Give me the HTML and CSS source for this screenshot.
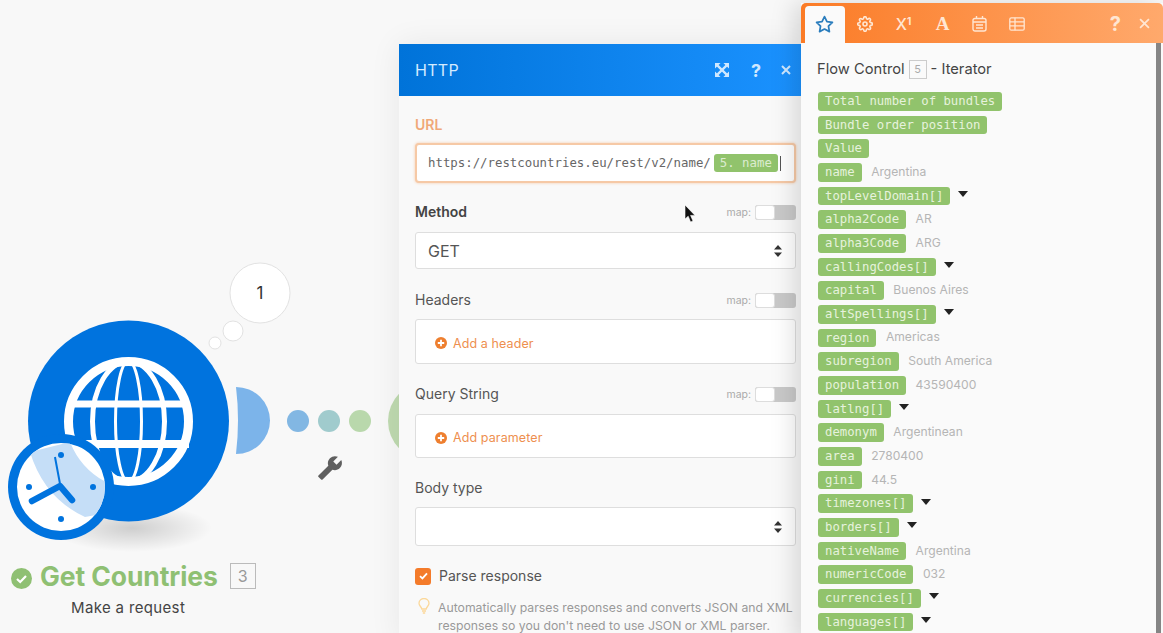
FILE: index.html
```html
<!DOCTYPE html>
<html lang="en">
<head>
    <meta charset="UTF-8">
    <meta name="viewport" content="width=device-width, initial-scale=1.0">
    <title>HTTP module mapping</title>
    <link rel="stylesheet" href="styles.css">
</head>
<body>
<div class="canvas">

    <!-- scenario nodes -->
    <svg class="scenario" width="399" height="633" viewBox="0 0 399 633">
        <defs>
            <radialGradient id="floor">
                <stop offset="0" stop-color="#000" stop-opacity=".17"/>
                <stop offset="1" stop-color="#000" stop-opacity="0"/>
            </radialGradient>
            <clipPath id="face"><circle cx="61" cy="487" r="44"/></clipPath>
        </defs>

        <circle cx="427" cy="421" r="39" fill="#bfdab0"/>
        <ellipse cx="132" cy="528" rx="80" ry="24" fill="url(#floor)"/>

        <circle cx="260" cy="293" r="30" fill="#fff" stroke="#e2e2e2"/>
        <text x="260" y="299" class="bubble-num" text-anchor="middle">1</text>
        <circle cx="233" cy="331" r="10" fill="#fff" stroke="#e2e2e2"/>
        <circle cx="215" cy="343" r="6" fill="#fff" stroke="#e2e2e2"/>

        <circle cx="128.500" cy="421" r="100.500" fill="#0073de"/>
        <g fill="none" stroke="#fff">
            <circle cx="128.500" cy="421.500" r="60" stroke-width="9"/>
            <ellipse cx="128.500" cy="421.500" rx="36" ry="60" stroke-width="5"/>
            <ellipse cx="128.500" cy="421.500" rx="13" ry="60" stroke-width="3"/>
            <path d="M68 404H189" stroke-width="7"/>
            <path d="M68 444H189" stroke-width="8"/>
        </g>

        <circle cx="61" cy="487" r="53" fill="#0073de"/>
        <circle cx="61" cy="487" r="44" fill="#fff"/>
        <path d="M30 452Q44 498 85 517L112 512V485Q82 472 70 442Z" fill="#c5def7" clip-path="url(#face)"/>
        <g fill="#0073de">
            <circle cx="29" cy="487" r="3"/>
            <circle cx="93" cy="487" r="3"/>
            <circle cx="61" cy="455" r="3"/>
            <circle cx="61" cy="519" r="3"/>
        </g>
        <path d="M55 457L60 484" stroke="#0073de" stroke-width="2" fill="none"/>
        <path d="M32 501L60 486L72 500" stroke="#0073de" stroke-width="6.500" stroke-linecap="round" stroke-linejoin="round" fill="none"/>

        <path d="M236 387A34 33.500 0 0 1 236 454Q240 420 236 387Z" fill="#7cb4ea"/>
        <circle cx="298" cy="421" r="11" fill="#82b7e3"/>
        <circle cx="329" cy="421" r="11" fill="#a0cbcd"/>
        <circle cx="360" cy="421" r="11" fill="#b9d8ac"/>

        <g transform="translate(343 455) scale(-1.080 1.080)">
            <path d="M22.700 19l-9.100-9.100c.9-2.300.4-5-1.500-6.900-2-2-5-2.400-7.400-1.300L9 6 6 9 1.600 4.700C.4 7.100.9 10.100 2.900 12.100c1.900 1.900 4.600 2.400 6.900 1.500l9.100 9.100c.4.400 1 .4 1.400 0l2.300-2.300c.5-.4.5-1.100.1-1.400z" fill="#5f5f5f"/>
        </g>
    </svg>

    <div class="node-label">
        <div class="node-title">
            <svg class="node-check" width="21" height="21" viewBox="0 0 21 21">
                <circle cx="10.500" cy="10.500" r="10.500" fill="#8fc073"/>
                <path d="M6 11l3.200 3L15 8" fill="none" stroke="#fff" stroke-width="2.200"/>
            </svg>
            <span class="node-name">Get Countries</span>
            <span class="node-id">3</span>
        </div>
        <div class="node-sub">Make a request</div>
    </div>

    <!-- http module settings -->
    <div class="panel">
        <div class="panel-head">
            <span class="panel-title">HTTP</span>
            <svg class="head-icon" width="14" height="14" viewBox="0 0 15 15">
                <path d="M2.500 2.500L12.500 12.500M12.500 2.500L2.500 12.500" stroke="#cfe8ff" stroke-width="2.400"/>
                <path d="M0 0H6L0 6ZM15 0V6L9 0ZM0 15V9L6 15ZM15 15H9L15 9Z" fill="#cfe8ff"/>
            </svg>
            <span class="head-help">?</span>
            <svg class="head-close" width="10" height="10" viewBox="0 0 10 10">
                <path d="M1 1L9 9M9 1L1 9" stroke="#cfe8ff" stroke-width="2"/>
            </svg>
        </div>

        <div class="panel-body">
            <div class="field field-url">
                <div class="label-row"><label class="label label-active">URL</label></div>
                <div class="url-input">
                    <span class="url-text">https://restcountries.eu/rest/v2/name/</span>
                    <span class="url-pill">5. name</span>
                    <span class="url-caret"></span>
                </div>
            </div>

            <div class="field field-method">
                <div class="label-row">
                    <label class="label label-bold">Method</label>
                    <span class="map">map:</span><span class="toggle"><span class="knob"></span></span>
                </div>
                <div class="select select-get">
                    <span>GET</span>
                    <svg width="8" height="12" viewBox="0 0 8 12"><path d="M4 0L8 4.500H0ZM4 12L0 7.500H8Z" fill="#333"/></svg>
                </div>
            </div>

            <div class="field field-headers">
                <div class="label-row">
                    <label class="label">Headers</label>
                    <span class="map">map:</span><span class="toggle"><span class="knob"></span></span>
                </div>
                <div class="add-box add-box-tall">
                    <svg width="12" height="12" viewBox="0 0 12 12"><circle cx="6" cy="6" r="6" fill="#ee7f2f"/><path d="M6 2.800V9.200M2.800 6H9.200" stroke="#fff" stroke-width="1.800"/></svg>
                    <span>Add a header</span>
                </div>
            </div>

            <div class="field field-query">
                <div class="label-row">
                    <label class="label">Query String</label>
                    <span class="map">map:</span><span class="toggle"><span class="knob"></span></span>
                </div>
                <div class="add-box">
                    <svg width="12" height="12" viewBox="0 0 12 12"><circle cx="6" cy="6" r="6" fill="#ee7f2f"/><path d="M6 2.800V9.200M2.800 6H9.200" stroke="#fff" stroke-width="1.800"/></svg>
                    <span>Add parameter</span>
                </div>
            </div>

            <div class="field field-body">
                <div class="label-row"><label class="label">Body type</label></div>
                <div class="select select-body">
                    <span></span>
                    <svg width="8" height="12" viewBox="0 0 8 12"><path d="M4 0L8 4.500H0ZM4 12L0 7.500H8Z" fill="#333"/></svg>
                </div>
            </div>

            <div class="check-row">
                <span class="checkbox">
                    <svg width="9" height="8" viewBox="0 0 9 8"><path d="M1 4.200L3.400 6.400L8 1.400" fill="none" stroke="#fff" stroke-width="1.800"/></svg>
                </span>
                <span class="label">Parse response</span>
            </div>

            <div class="note">
                <svg class="bulb" width="12" height="16" viewBox="0 0 12 16">
                    <path d="M3.800 11C3.500 8.800 1 7.800 1 5.200A5 4.700 0 0 1 11 5.200C11 7.800 8.500 8.800 8.200 11ZM4 13H8M4.800 15H7.200" fill="none" stroke="#fbd89a" stroke-width="1.300"/>
                </svg>
                <p>Automatically parses responses and converts JSON and XML responses so you don't need to use JSON or XML parser.</p>
            </div>
        </div>

        <svg class="cursor" width="12" height="18" viewBox="0 0 12 18">
            <path d="M1 0V14L4.200 11.200L6.600 17L9 16L6.600 10.400H11Z" fill="#111" stroke="#fff" stroke-width=".6"/>
        </svg>
    </div>

    <!-- mapping picker -->
    <div class="picker">
        <div class="picker-tabs">
            <span class="tab tab-active">
                <svg width="19" height="19" viewBox="0 0 24 24"><polygon points="12 2 15.090 8.260 22 9.270 17 14.140 18.180 21.020 12 17.770 5.820 21.020 7 14.140 2 9.270 8.910 8.260 12 2" fill="none" stroke="#2b7dbd" stroke-width="2.200" stroke-linejoin="round"/></svg>
            </span>
            <span class="tab">
                <svg width="16" height="16" viewBox="0 0 24 24" fill="none" stroke="#ffe6d2" stroke-width="2.400"><circle cx="12" cy="12" r="3"/><path d="M19.400 15a1.650 1.650 0 0 0 .33 1.820l.06.06a2 2 0 0 1 0 2.830 2 2 0 0 1-2.830 0l-.06-.06a1.650 1.650 0 0 0-1.820-.33 1.650 1.650 0 0 0-1 1.510V21a2 2 0 0 1-2 2 2 2 0 0 1-2-2v-.09A1.650 1.650 0 0 0 9 19.400a1.650 1.650 0 0 0-1.820.33l-.06.06a2 2 0 0 1-2.830 0 2 2 0 0 1 0-2.830l.06-.06a1.650 1.650 0 0 0 .33-1.820 1.650 1.650 0 0 0-1.510-1H3a2 2 0 0 1-2-2 2 2 0 0 1 2-2h.09A1.650 1.650 0 0 0 4.600 9a1.650 1.650 0 0 0-.33-1.820l-.06-.06a2 2 0 0 1 0-2.830 2 2 0 0 1 2.830 0l.06.06a1.650 1.650 0 0 0 1.820.33H9a1.650 1.650 0 0 0 1-1.510V3a2 2 0 0 1 2-2 2 2 0 0 1 2 2v.09a1.650 1.650 0 0 0 1 1.510 1.650 1.650 0 0 0 1.820-.33l.06-.06a2 2 0 0 1 2.830 0 2 2 0 0 1 0 2.830l-.06.06a1.650 1.650 0 0 0-.33 1.820V9a1.650 1.650 0 0 0 1.510 1H21a2 2 0 0 1 2 2 2 2 0 0 1-2 2h-.09a1.650 1.650 0 0 0-1.510 1z"/></svg>
            </span>
            <span class="tab tab-math">X<sup>1</sup></span>
            <span class="tab tab-font">A</span>
            <span class="tab tab-cal">
                <svg width="15" height="16" viewBox="0 0 15 16" fill="none" stroke="#ffe6d2" stroke-width="1.400"><rect x="1" y="2.500" width="13" height="12.500" rx="2"/><path d="M1 6H14M4.500 0V3M10.500 0V3M4 9H11M4 12H11"/></svg>
            </span>
            <span class="tab tab-table">
                <svg width="16" height="14" viewBox="0 0 16 14" fill="none" stroke="#ffe6d2" stroke-width="1.300"><rect x=".8" y=".8" width="14.400" height="12.400" rx="1.500"/><path d="M.8 4.800H15.200M.8 8.800H15.200M6 .8V13.200"/></svg>
            </span>
            <span class="picker-help">?</span>
            <svg class="picker-close" width="11" height="11" viewBox="0 0 10 10"><path d="M1 1L9 9M9 1L1 9" stroke="#ffe6d2" stroke-width="1.600"/></svg>
        </div>

        <div class="picker-body">
            <div class="picker-title">Flow Control <span class="picker-id">5</span> - Iterator</div>
            <ul class="items">
                <li><span class="pill">Total number of bundles</span></li>
                <li><span class="pill">Bundle order position</span></li>
                <li><span class="pill">Value</span></li>
                <li><span class="pill">name</span><span class="val">Argentina</span></li>
                <li><span class="pill">topLevelDomain[]</span><span class="arrow"></span></li>
                <li><span class="pill">alpha2Code</span><span class="val">AR</span></li>
                <li><span class="pill">alpha3Code</span><span class="val">ARG</span></li>
                <li><span class="pill">callingCodes[]</span><span class="arrow"></span></li>
                <li><span class="pill">capital</span><span class="val">Buenos Aires</span></li>
                <li><span class="pill">altSpellings[]</span><span class="arrow"></span></li>
                <li><span class="pill">region</span><span class="val">Americas</span></li>
                <li><span class="pill">subregion</span><span class="val">South America</span></li>
                <li><span class="pill">population</span><span class="val">43590400</span></li>
                <li><span class="pill">latlng[]</span><span class="arrow"></span></li>
                <li><span class="pill">demonym</span><span class="val">Argentinean</span></li>
                <li><span class="pill">area</span><span class="val">2780400</span></li>
                <li><span class="pill">gini</span><span class="val">44.5</span></li>
                <li><span class="pill">timezones[]</span><span class="arrow"></span></li>
                <li><span class="pill">borders[]</span><span class="arrow"></span></li>
                <li><span class="pill">nativeName</span><span class="val">Argentina</span></li>
                <li><span class="pill">numericCode</span><span class="val">032</span></li>
                <li><span class="pill">currencies[]</span><span class="arrow"></span></li>
                <li><span class="pill">languages[]</span><span class="arrow"></span></li>
            </ul>
        </div>
        <div class="scrollbar"></div>
    </div>
</div>
</body>
</html>
```

FILE: styles.css
```css
*{
    box-sizing:border-box;
}
html, body{
    margin:0;
    height:100%;
    overflow:hidden;
}
body{
    background:#f8f8f8;
    font-family:"Inter","Noto Sans",sans-serif;
    color:#555;
}
.canvas{
    position:relative;
    width:1163px;
    height:633px;
    overflow:hidden;
}

/* scenario */
.scenario{
    position:absolute;
    left:0;
    top:0;
}
.bubble-num{
    font-family:"Inter",sans-serif;
    font-size:17px;
    fill:#333;
}
.node-label{
    position:absolute;
    left:11px;
    top:561px;
}
.node-title{
    display:flex;
    align-items:center;
    height:30px;
}
.node-check{
    margin-top:5px;
    margin-right:8px;
}
.node-name{
    font-size:26.500px;
    font-weight:700;
    color:#8fc073;
    margin-right:12px;
    letter-spacing:-.1px;
}
.node-id{
    width:26px;
    height:26px;
    border:1px solid #bbb;
    color:#999;
    font-size:16px;
    display:flex;
    align-items:center;
    justify-content:center;
}
.node-sub{
    font-size:15px;
    letter-spacing:.35px;
    color:#444;
    margin-top:7px;
    margin-left:60px;
}

/* http panel */
.panel{
    position:absolute;
    left:399px;
    top:44px;
    width:403px;
    height:600px;
    background:#f9f9f9;
    box-shadow:0 0 30px rgba(0,0,0,.07);
}
.panel-head{
    height:52px;
    display:flex;
    align-items:center;
    padding-left:16px;
    background:linear-gradient(90deg,#0073d9,#1b92ff);
}
.panel-title{
    font-size:16px;
    color:#d4ebff;
    flex:1;
    letter-spacing:.3px;
}
.head-icon{
    margin-right:22px;
}
.head-help{
    font-size:18px;
    font-weight:700;
    color:#cfe8ff;
    margin-right:20px;
}
.head-close{
    margin-right:11px;
}
.panel-body{
    padding:0 6px 0 16px;
}
.field-url{ margin-top:20px; }
.field-url .label-row{ margin-bottom:9px; }
.field-method{ margin-top:20px; }
.field-method .label-row{ margin-bottom:11px; }
.field-headers{ margin-top:22px; }
.field-headers .label-row{ margin-bottom:10px; }
.field-query{ margin-top:21px; }
.field-query .label-row{ margin-bottom:11px; }
.field-body{ margin-top:21px; }
.field-body .label-row{ margin-bottom:10px; }

.label-row{
    display:flex;
    align-items:center;
    height:18px;
}
.label{
    font-size:14px;
    color:#555;
    flex:1;
    margin-top:-2px;
}
.label-bold{
    font-weight:600;
    color:#444;
}
.label-active{
    font-weight:600;
    color:#f0a878;
}
.map{
    font-size:10.500px;
    color:#aaa;
    margin-right:4px;
}
.toggle{
    width:41px;
    height:15px;
    border-radius:3px;
    background:#c9c9c9;
    display:block;
}
.knob{
    display:block;
    width:20px;
    height:15px;
    border-radius:3px;
    background:#fff;
    border:1px solid #ddd;
}
.url-input{
    height:40px;
    background:#fff;
    border:2px solid #f6c9a6;
    border-radius:4px;
    box-shadow:0 0 3px #f6c9a6;
    display:flex;
    align-items:center;
    padding-left:11px;
    font-family:"DejaVu Sans Mono",monospace;
    font-size:12.370px;
    color:#666;
}
.url-text{
    margin-right:3px;
}
.url-pill{
    background:#91c36c;
    color:#dcecd0;
    height:18px;
    line-height:18px;
    padding:0 6px;
    border-radius:3px;
}
.url-caret{
    width:1px;
    height:15px;
    background:#555;
    margin-left:2px;
}
.select{
    background:#fff;
    border:1px solid #dedede;
    border-radius:3px;
    display:flex;
    align-items:center;
    justify-content:space-between;
    padding:0 13px 0 12px;
    font-size:16px;
    color:#555;
}
.select-get{ height:37px; }
.select-body{ height:39px; }
.add-box{
    height:44px;
    background:#fff;
    border:1px solid #dedede;
    border-radius:3px;
    display:flex;
    align-items:center;
    gap:6px;
    padding-left:19px;
    padding-top:3px;
    font-size:12.500px;
    color:#ee8f4f;
    letter-spacing:.1px;
}
.add-box-tall{ height:45px; }
.check-row{
    display:flex;
    align-items:center;
    gap:8px;
    margin-top:21px;
    height:18px;
}
.checkbox{
    width:16px;
    height:17px;
    border-radius:3px;
    background:#f47b2a;
    display:flex;
    align-items:center;
    justify-content:center;
}
.note{
    display:flex;
    margin-top:14px;
    padding-left:3px;
}
.bulb{
    flex:none;
    margin-right:8px;
    margin-top:-1px;
}
.note p{
    margin:0;
    font-size:12.240px;
    line-height:18px;
    color:#999;
    white-space:normal;
}
.cursor{
    position:absolute;
    left:285px;
    top:161px;
}

/* mapping picker */
.picker{
    position:absolute;
    left:801px;
    top:3px;
    width:362px;
    height:640px;
    background:#fafafa;
    box-shadow:-8px 0 22px rgba(0,0,0,.13);
}
.picker-tabs{
    height:40px;
    display:flex;
    align-items:flex-end;
    padding-left:4px;
    padding-right:13px;
    border-radius:5px 5px 0 0;
    background:linear-gradient(90deg,#fb7b26,#ffa96c);
    color:#ffe6d2;
}
.tab{
    width:39px;
    height:37px;
    display:flex;
    align-items:center;
    justify-content:center;
    padding-bottom:1px;
}
.tab-active{
    width:40px;
    padding-right:2px;
    background:#fafafa;
    border-radius:4px 4px 0 0;
}
.tab-math{
    font-size:16px;
    font-weight:500;
}
.tab-math sup{
    font-size:10px;
    font-weight:700;
    margin-top:-6px;
}
.tab-font{
    font-family:"Liberation Serif",serif;
    font-size:19px;
    font-weight:700;
}
.tab-cal{ width:35px; }
.tab-table{ width:40px; }
.picker-help{
    margin-left:auto;
    margin-right:18px;
    height:37px;
    line-height:37px;
    font-size:20px;
    font-weight:700;
}
.picker-close{
    margin-bottom:14px;
}
.picker-body{
    padding:0 0 0 16px;
}
.picker-title{
    font-size:14.700px;
    color:#444;
    margin-top:16px;
    height:20px;
    display:flex;
    align-items:center;
    gap:4px;
}
.picker-id{
    width:18px;
    height:19px;
    border:1px solid #ccc;
    color:#aaa;
    font-size:11px;
    display:flex;
    align-items:center;
    justify-content:center;
}
.items{
    list-style:none;
    margin:13px 0 0;
    padding:0 0 0 1px;
    display:flex;
    flex-direction:column;
    gap:5.180px;
}
.items li{
    display:flex;
    align-items:center;
    height:18.500px;
}
.pill{
    font-family:"DejaVu Sans Mono",monospace;
    font-size:12.300px;
    line-height:18.500px;
    height:18.500px;
    padding:0 7px;
    border-radius:3px;
    background:#91c36c;
    color:#e6f2dc;
    white-space:nowrap;
}
.val{
    font-size:12.100px;
    color:#b5b5b5;
    margin-left:9.500px;
    margin-top:-2px;
}
.arrow{
    width:0;
    height:0;
    border-left:5.500px solid transparent;
    border-right:5.500px solid transparent;
    border-top:6px solid #222;
    margin-left:8px;
    margin-top:-4px;
}
.scrollbar{
    position:absolute;
    right:2px;
    top:40px;
    bottom:0;
    width:5px;
    background:#858585;
}
```
